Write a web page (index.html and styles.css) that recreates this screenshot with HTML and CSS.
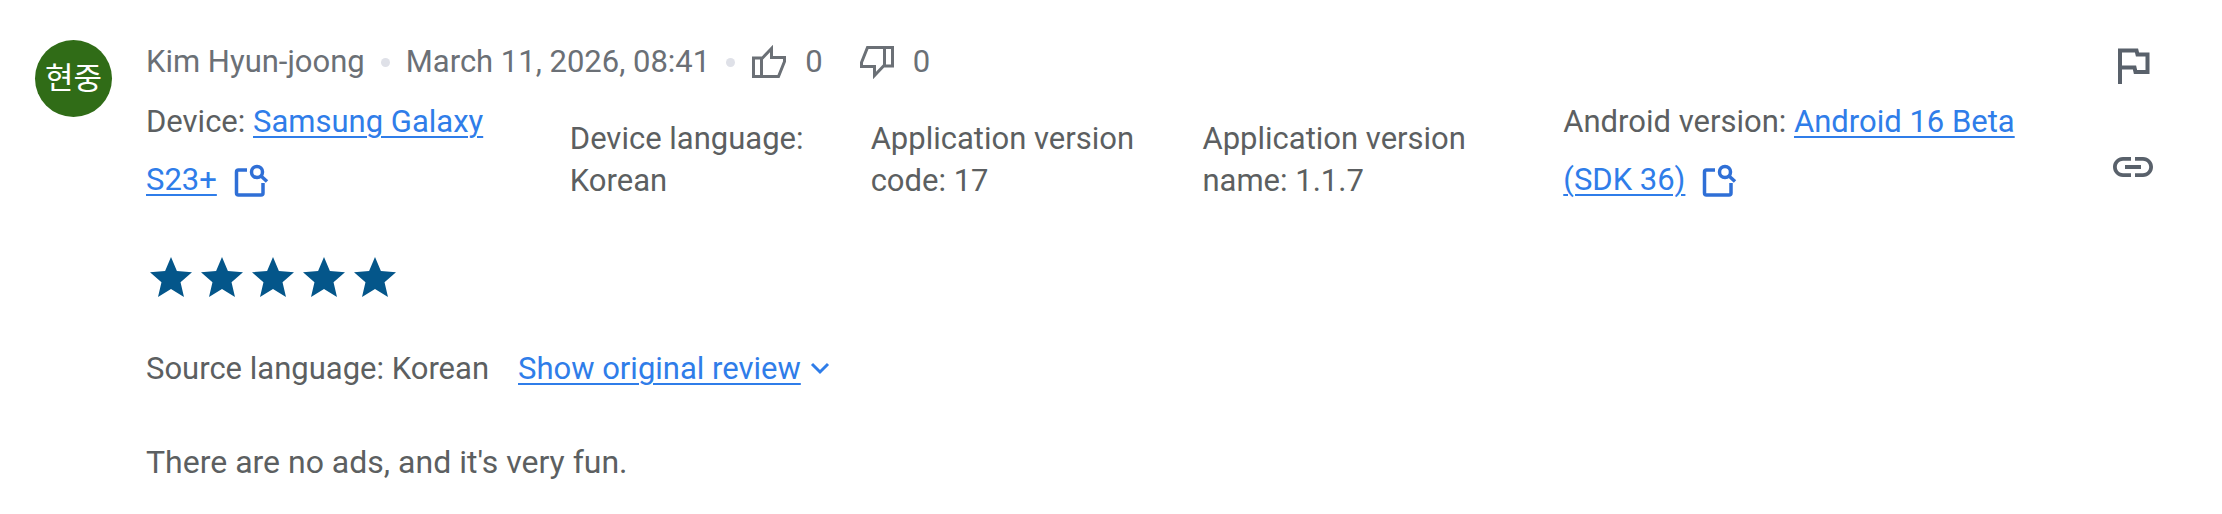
FILE: index.html
```
<!DOCTYPE html>
<html lang="en">
<head>
<meta charset="utf-8">
<meta name="viewport" content="width=device-width, initial-scale=1">
<title>User review</title>
<link rel="stylesheet" href="styles.css">
</head>
<body>
<svg class="defs" aria-hidden="true">
  <symbol id="device-search" viewBox="0 0 36 36">
    <path d="M14 6H5.500Q3.500 6 3.500 8V29Q3.500 31 5.500 31H28Q30 31 30 29V19" fill="none" stroke="currentColor" stroke-width="3.500"/>
    <circle cx="24" cy="8" r="5.500" fill="none" stroke="currentColor" stroke-width="3.500"/>
    <path d="M28 12L34 17.500" stroke="currentColor" stroke-width="3.500"/>
  </symbol>
  <symbol id="star" viewBox="2 2 20 19">
    <path d="M12 17.270L18.180 21l-1.640-7.030L22 9.240l-7.190-.61L12 2 9.190 8.630 2 9.240l5.460 4.730L5.820 21z" fill="currentColor"/>
  </symbol>
  <symbol id="thumb" viewBox="0 0 36 36">
    <path d="M2.500 14H10.500V32.500H2.500ZM10.500 15L20.500 4.500V13.500H33.500V17.500L27.500 32.500H10.500" fill="none" stroke="currentColor" stroke-width="3"/>
  </symbol>
</svg>
<article class="review">
  <div class="avatar">현중</div>
  <div class="main">
    <header class="head">
      <span>Kim Hyun-joong</span>
      <i class="dot"></i>
      <time datetime="2026-03-11T08:41">March 11, 2026, 08:41</time>
      <i class="dot"></i>
      <span class="vote"><svg class="thumb" role="img" aria-label="Helpful"><use href="#thumb"/></svg>0</span>
      <span class="vote"><svg class="thumb down" role="img" aria-label="Not helpful"><use href="#thumb"/></svg>0</span>
    </header>
    <div class="facts">
      <div class="fact tall">Device: <a href="#device">Samsung Galaxy S23+</a><button class="lookup" aria-label="Filter by device"><svg><use href="#device-search"/></svg></button></div>
      <div class="fact">Device language: Korean</div>
      <div class="fact">Application version code: 17</div>
      <div class="fact">Application version name: 1.1.7</div>
      <div class="fact tall">Android version: <a href="#android">Android 16 Beta (SDK&nbsp;36)</a><button class="lookup" aria-label="Filter by Android version"><svg><use href="#device-search"/></svg></button></div>
    </div>
    <div class="stars" role="img" aria-label="5 out of 5 stars">
      <svg><use href="#star"/></svg><svg><use href="#star"/></svg><svg><use href="#star"/></svg><svg><use href="#star"/></svg><svg><use href="#star"/></svg>
    </div>
    <div class="source">
      <span>Source language: Korean</span>
      <a class="original" href="#original">Show original review</a>
      <svg class="chevron" viewBox="0 0 20 20" aria-hidden="true"><path d="M2 5L10 13L18 5" fill="none" stroke="currentColor" stroke-width="3"/></svg>
    </div>
    <p class="text">There are no ads, and it's very fun.</p>
  </div>
  <div class="actions">
    <button class="action" aria-label="Report review"><svg viewBox="0 0 48 48"><path d="M11 44V10.500H27.500L28.500 14.500H38.500V32H26.500L25.500 27.500H11" fill="none" stroke="currentColor" stroke-width="4"/></svg></button>
    <button class="action" aria-label="Copy link"><svg viewBox="0 0 24 24"><path d="M3.900 12c0-1.710 1.390-3.100 3.100-3.100h4V7H7c-2.760 0-5 2.240-5 5s2.240 5 5 5h4v-1.900H7c-1.710 0-3.100-1.390-3.100-3.100zM8 13h8v-2H8v2zm9-6h-4v1.900h4c1.710 0 3.100 1.390 3.100 3.100s-1.390 3.100-3.100 3.100h-4V17h4c2.760 0 5-2.240 5-5s-2.240-5-5-5z" fill="currentColor"/></svg></button>
  </div>
</article>
</body>
</html>
```
FILE: styles.css
```
* {
  box-sizing: border-box;
}

body {
  margin: 0;
  background: #fff;
  color: #5c5f61;
  font-family: Roboto, "Noto Sans CJK KR", sans-serif;
  font-size: 31px;
  line-height: 42px;
}

svg {
  display: block;
}

.defs {
  display: none;
}

button {
  padding: 0;
  border: 0;
  background: none;
  cursor: pointer;
}

a {
  color: #2f7de9;
  text-decoration-thickness: 2px;
  text-underline-offset: 4px;
}

.review {
  display: grid;
  grid-template-columns: 76px 1fr 48px;
  padding: 40px 65px 0 35px;
}

.avatar {
  width: 77px;
  height: 77px;
  border-radius: 50%;
  background: #306c17;
  color: #fff;
  line-height: 77px;
  text-align: center;
}

.main {
  padding: 1px 0 0 35px;
}

.head {
  display: flex;
  align-items: center;
  color: #6b7076;
}

.dot {
  width: 9px;
  height: 9px;
  margin: 0 16px;
  border-radius: 50%;
  background: #dfe1e8;
}

.vote {
  display: flex;
  align-items: center;
  gap: 18px;
  margin-right: 36px;
}

.thumb {
  width: 36px;
  height: 36px;
}

.down {
  transform: rotate(180deg);
}

.facts {
  display: grid;
  grid-template-columns: 424fr 301fr 332fr 361fr 546fr;
  align-items: end;
  margin-top: 10px;
}

.fact {
  padding: 0 50px 7px 0;
}

.tall {
  padding-bottom: 0;
  line-height: 58px;
}

.lookup {
  margin-left: 16px;
  color: #2f6fd6;
  vertical-align: middle;
}

.lookup svg {
  width: 36px;
  height: 36px;
}

.stars {
  display: flex;
  gap: 9px;
  padding-left: 4px;
  margin-top: 48px;
  color: #04568a;
}

.stars svg {
  width: 42px;
  height: 40px;
}

.source {
  display: flex;
  align-items: center;
  margin-top: 51px;
}

.original {
  margin: 0 9px 0 29px;
}

.chevron {
  width: 20px;
  height: 20px;
  color: #2f7de9;
}

.text {
  margin: 51px 0 0;
  font-size: 32px;
}

.actions {
  display: grid;
  gap: 55px;
  align-content: start;
  color: #59616b;
}

.action {
  color: inherit;
}

.action svg {
  width: 48px;
  height: 48px;
}
```
